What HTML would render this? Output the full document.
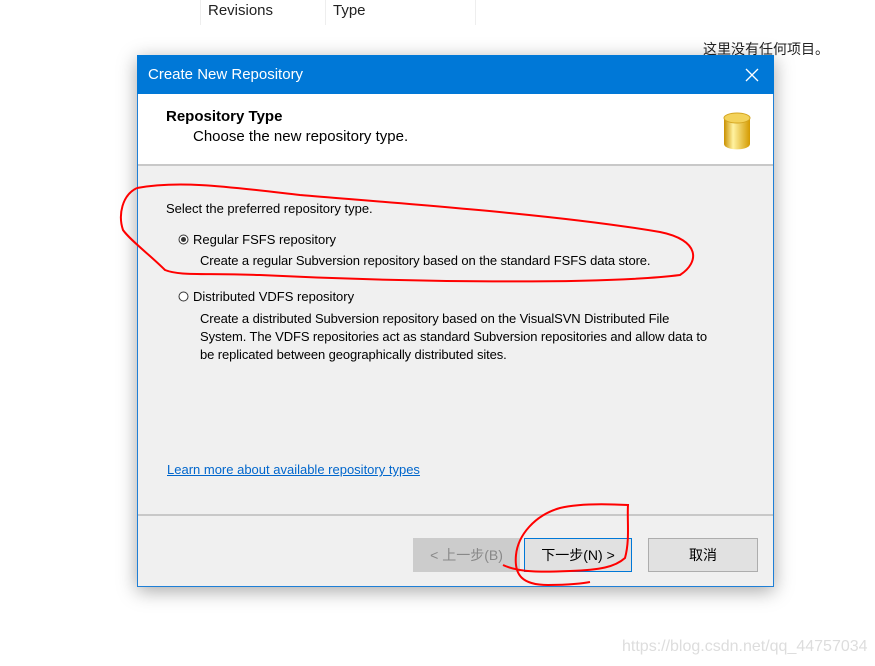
<!DOCTYPE html>
<html><head><meta charset="utf-8"><style>
*{margin:0;padding:0;box-sizing:border-box}
body{width:875px;height:666px;background:#fff;position:relative;overflow:hidden;font-family:"Liberation Sans","Noto Sans CJK SC",sans-serif;color:#000}
.a{position:absolute;white-space:nowrap}
.dlg{position:absolute;left:137px;top:55px;width:637px;height:532px;background:#f0f0f0;border:1px solid #1f7fd6;box-shadow:0 4px 18px rgba(0,0,0,.35)}
.btn{position:absolute;top:538px;height:34px;font-size:14px;text-align:center;line-height:32px}
</style></head><body>
<div class="a" style="left:200px;top:0;width:1px;height:25px;background:#eee"></div>
<div class="a" style="left:325px;top:0;width:1px;height:25px;background:#eee"></div>
<div class="a" style="left:475px;top:0;width:1px;height:25px;background:#eee"></div>
<div class="a" style="left:208px;top:2px;font-size:15px;color:#222">Revisions</div>
<div class="a" style="left:333px;top:2px;font-size:15px;color:#222">Type</div>
<div class="a" style="left:703px;top:39px;font-size:14px;color:#222">这里没有任何项目。</div>
<div class="dlg"></div>
<div class="a" style="left:137px;top:55px;width:637px;height:39px;background:#0078d7"></div>
<div class="a" style="left:148px;top:66px;font-size:15px;color:#fff">Create New Repository</div>
<svg class="a" style="left:745px;top:68px" width="14" height="14"><path d="M1 1L13 13M13 1L1 13" stroke="#fff" stroke-width="1.3"/></svg>
<div class="a" style="left:138px;top:94px;width:635px;height:72px;background:#fff;border-bottom:2px solid #c8c8c8"></div>
<div class="a" style="left:166px;top:108px;font-size:15px;font-weight:bold">Repository Type</div>
<div class="a" style="left:193px;top:128px;font-size:15px">Choose the new repository type.</div>
<svg class="a" style="left:723px;top:112px" width="28" height="38"><defs><linearGradient id="g" x1="0" x2="1"><stop offset="0" stop-color="#c99000"/><stop offset=".35" stop-color="#fff2a0"/><stop offset="1" stop-color="#d49a00"/></linearGradient></defs><path d="M1 6v26a12 5 0 0 0 26 0V6" fill="url(#g)"/><ellipse cx="14" cy="6" rx="13" ry="5" fill="#f3d25a" stroke="#d4a520"/></svg>
<div class="a" style="left:166px;top:201px;font-size:13px">Select the preferred repository type.</div>
<svg class="a" style="left:178px;top:234px" width="11" height="11"><circle cx="5.5" cy="5.5" r="4.5" fill="#fff" stroke="#333"/><circle cx="5.5" cy="5.5" r="2.5" fill="#333"/></svg>
<div class="a" style="left:193px;top:232px;font-size:13px">Regular FSFS repository</div>
<div class="a" style="left:200px;top:253px;font-size:13px;letter-spacing:-0.1px">Create a regular Subversion repository based on the standard FSFS data store.</div>
<svg class="a" style="left:178px;top:291px" width="11" height="11"><circle cx="5.5" cy="5.5" r="4.5" fill="#fff" stroke="#333"/></svg>
<div class="a" style="left:193px;top:289px;font-size:13px">Distributed VDFS repository</div>
<div class="a" style="left:200px;top:310px;font-size:13px;line-height:18px;letter-spacing:-0.1px">Create a distributed Subversion repository based on the VisualSVN Distributed File<br>System. The VDFS repositories act as standard Subversion repositories and allow data to<br>be replicated between geographically distributed sites.</div>
<div class="a" style="left:167px;top:462px;font-size:13px;color:#0066cc;text-decoration:underline">Learn more about available repository types</div>
<div class="a" style="left:138px;top:514px;width:635px;height:2px;background:#c8c8c8"></div>
<div class="btn a" style="left:413px;width:107px;background:#ccc;border:1px solid #ccc;color:#888">&lt; 上一步(B)</div>
<div class="btn a" style="left:524px;width:108px;background:#e1e1e1;border:1px solid #0078d7">下一步(N) &gt;</div>
<div class="btn a" style="left:648px;width:110px;background:#e1e1e1;border:1px solid #adadad">取消</div>
<div class="a" style="left:622px;top:638px;font-size:16px;color:#ddd">https://blog.csdn.net/qq_44757034</div>
<svg class="a" style="left:0;top:0" width="875" height="666" fill="none" stroke="#f00" stroke-width="2">
<path d="M137 188C180 180 230 187 300 195C420 205 560 215 660 232C700 240 700 262 680 275C600 285 400 282 260 275C200 273 180 276 165 270C150 255 130 240 123 230C118 215 122 195 137 188"/>
<path d="M503 565C520 573 545 572 570 571C600 570 615 567 625 558C630 540 627 520 628 505C610 504 580 503 560 508C535 515 518 535 516 555C514 575 522 585 548 585C570 585 585 583 590 582"/>
</svg>
</body></html>
